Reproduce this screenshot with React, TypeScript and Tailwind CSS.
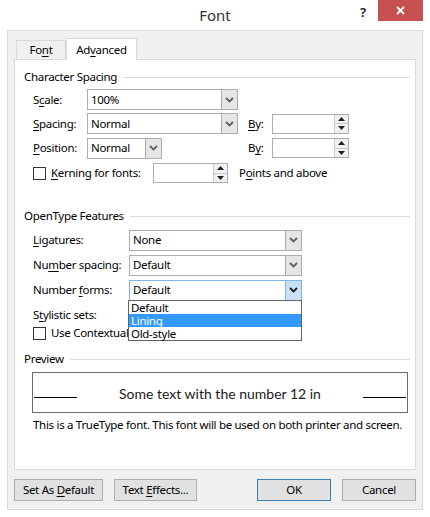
import React from 'react';

const font = "font-['Noto_Sans',sans-serif] text-[11.5px] tracking-[-0.3px]";

const U: React.FC<{ children: React.ReactNode }> = ({ children }) => <span className="underline underline-offset-[2px]">{children}</span>;

const Chevron: React.FC<{ dark?: boolean }> = ({ dark }) => (
    <svg width="9" height="6" viewBox="0 0 9 6">
        <path d="M1 1 L4.5 4.5 L8 1" fill="none" stroke={dark ? '#1a1a1a' : '#606060'} strokeWidth="1.8" />
    </svg>
);

const Combo: React.FC<{ value: string; w: string; active?: boolean }> = ({ value, w, active }) => (
    <div className={`${w} h-[21px] flex border ${active ? 'border-[#7eb4ea]' : 'border-[#adadad]'} bg-white`}>
        <div className="flex-1 pl-[3px] flex items-center text-black">{value}</div>
        <div className={`w-[16px] flex items-center justify-center border-l ${active ? 'bg-[#c9e0f7] border-[#7eb4ea]' : 'bg-[#e5e5e5] border-[#adadad]'}`}>
            <Chevron dark={active} />
        </div>
    </div>
);

const Spinner: React.FC<{ w: string }> = ({ w }) => (
    <div className={`${w} h-[20px] flex border border-[#adadad] bg-white`}>
        <div className="flex-1" />
        <div className="w-[14px] flex flex-col border-l border-[#c9c9c9] bg-[#f0f0f0]">
            <div className="flex-1 flex items-center justify-center border-b border-[#c9c9c9]">
                <svg width="7" height="4" viewBox="0 0 7 4"><path d="M0 4 L3.5 0 L7 4Z" fill="#202020" /></svg>
            </div>
            <div className="flex-1 flex items-center justify-center">
                <svg width="7" height="4" viewBox="0 0 7 4"><path d="M0 0 L3.5 4 L7 0Z" fill="#202020" /></svg>
            </div>
        </div>
    </div>
);

const Group: React.FC<{ title: string }> = ({ title }) => (
    <div className="flex items-center gap-[6px] pl-[9px] pr-[5px] h-[14px]">
        <span className="text-black whitespace-nowrap">{title}</span>
        <div className="flex-1 h-px bg-[#dcdcdc]" />
    </div>
);

const Check: React.FC = () => <div className="w-[13px] h-[13px] shrink-0 border border-[#333] bg-white" />;

const Btn: React.FC<{ children: React.ReactNode; w: string; primary?: boolean }> = ({ children, w, primary }) => (
    <div className={`${w} h-[22px] flex items-center justify-center border ${primary ? 'border-[#3c7fb1]' : 'border-[#adadad]'} bg-[#e1e1e1] text-black`}>
        <span>{children}</span>
    </div>
);

export default function App() {
    return (
        <div className={`w-[430px] h-[517px] bg-white flex flex-col ${font}`}>
            <div className="h-[30px] relative flex items-center justify-center">
                <span className="text-[15px] tracking-normal text-[#333]">Font</span>
                <span className="absolute left-[360px] top-[3px] text-[13px] font-bold text-[#333]">?</span>
                <div className="absolute left-[378px] top-0 w-[45px] h-[21px] bg-[#c75050] flex items-center justify-center">
                    <svg width="9" height="9" viewBox="0 0 9 9"><path d="M1 1 L8 8 M8 1 L1 8" stroke="#fff" strokeWidth="1.8" /></svg>
                </div>
            </div>
            <div className="mx-[7px] h-[480px] border border-[#d9d9d9] bg-[#f0f0f0] px-[6px] pt-[7px] flex flex-col">
                <div className="flex items-end h-[22px] pl-[2px] relative z-10">
                    <div className="w-[50px] h-[19px] mb-px border border-b-0 border-[#d9d9d9] bg-[#f0f0f0] flex items-center justify-center text-black">
                        <span>Fo<U>n</U>t</span>
                    </div>
                    <div className="w-[71px] h-[22px] border border-b-0 border-[#d9d9d9] bg-white flex items-center justify-center text-black">
                        <span>Ad<U>v</U>anced</span>
                    </div>
                </div>
                <div className="h-[411px] -mt-px border border-[#d9d9d9] bg-white relative flex flex-col pt-[10px] text-black">
                    <Group title="Character Spacing" />
                    <div className="flex items-center h-[21px] mt-[5px] pl-[18px]">
                        <span className="w-[54px]">S<U>c</U>ale:</span>
                        <Combo value="100%" w="w-[151px]" />
                    </div>
                    <div className="flex items-center h-[21px] mt-[3px] pl-[18px]">
                        <span className="w-[54px]"><U>S</U>pacing:</span>
                        <Combo value="Normal" w="w-[151px]" />
                        <span className="ml-[10px] w-[24px]"><U>B</U>y:</span>
                        <Spinner w="w-[77px]" />
                    </div>
                    <div className="flex items-center h-[22px] mt-[3px] pl-[18px]">
                        <span className="w-[54px]"><U>P</U>osition:</span>
                        <Combo value="Normal" w="w-[75px]" />
                        <span className="ml-[86px] w-[24px]">B<U>y</U>:</span>
                        <Spinner w="w-[77px]" />
                    </div>
                    <div className="flex items-center h-[20px] mt-[4px] pl-[18px]">
                        <Check />
                        <span className="ml-[5px] w-[102px]"><U>K</U>erning for fonts:</span>
                        <Spinner w="w-[75px]" />
                        <span className="ml-[11px]">P<U>o</U>ints and above</span>
                    </div>
                    <div className="mt-[26px]"><Group title="OpenType Features" /></div>
                    <div className="flex items-center h-[22px] mt-[6px] pl-[18px]">
                        <span className="w-[96px]"><U>L</U>igatures:</span>
                        <Combo value="None" w="w-[173px]" />
                    </div>
                    <div className="flex items-center h-[22px] mt-[3px] pl-[18px]">
                        <span className="w-[96px] whitespace-nowrap">Nu<U>m</U>ber spacing:</span>
                        <Combo value="Default" w="w-[173px]" />
                    </div>
                    <div className="flex items-center h-[22px] mt-[3px] pl-[18px]">
                        <span className="w-[96px] whitespace-nowrap">Number <U>f</U>orms:</span>
                        <Combo value="Default" w="w-[173px]" active />
                    </div>
                    <div className="flex items-center h-[18px] mt-[5px] pl-[18px]">
                        <span>S<U>t</U>ylistic sets:</span>
                    </div>
                    <div className="flex items-center h-[16px] mt-[1px] pl-[18px]">
                        <Check />
                        <span className="ml-[5px] whitespace-nowrap">Use Contextual <U>A</U>lternates</span>
                    </div>
                    <div className="mt-[11px]"><Group title="Preview" /></div>
                    <div className="ml-[17px] mr-[7px] mt-[6px] h-[41px] border border-[#6d6d6d] flex items-center justify-center relative">
                        <div className="absolute left-[1px] top-[24px] w-[43px] h-px bg-black" />
                        <div className="absolute right-[1px] top-[24px] w-[43px] h-px bg-black" />
                        <span className="text-[14px] tracking-normal text-[#1a1a1a] font-['Lato',sans-serif] mt-[2px]">Some text with the number 12 in</span>
                    </div>
                    <div className="pl-[18px] mt-[3px] whitespace-nowrap">This is a TrueType font. This font will be used on both printer and screen.</div>

                    <div className="absolute left-[113px] top-[240px] w-[174px] h-[41px] border border-[#646464] bg-white flex flex-col z-20">
                        <div className="h-[13px] flex items-center pl-[2px]">Default</div>
                        <div className="h-[13px] flex items-center pl-[2px] bg-[#3399ff] text-white">Lining</div>
                        <div className="h-[13px] flex items-center pl-[2px]">Old-style</div>
                    </div>
                </div>
                <div className="flex items-center h-[22px] mt-[9px] gap-[11px]">
                    <Btn w="w-[89px]">Set As <U>D</U>efault</Btn>
                    <Btn w="w-[83px]">Text <U>E</U>ffects...</Btn>
                    <div className="flex-1" />
                    <Btn w="w-[74px]" primary>OK</Btn>
                    <Btn w="w-[74px]">Cancel</Btn>
                </div>
            </div>
        </div>
    );
}
